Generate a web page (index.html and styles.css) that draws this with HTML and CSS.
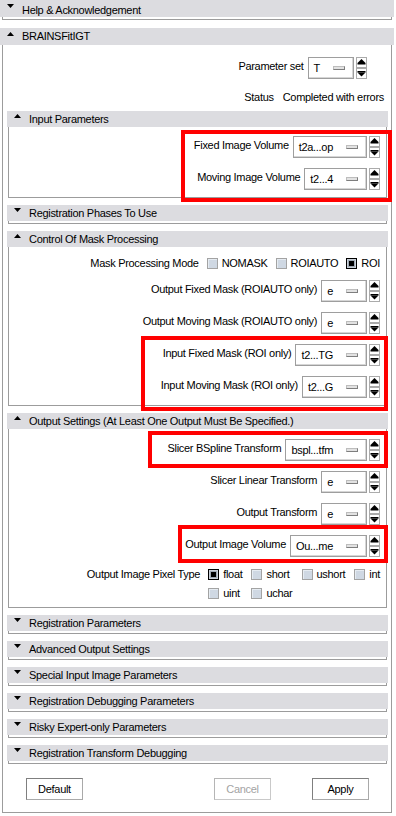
FILE: index.html
```html
<!DOCTYPE html>
<html lang="en">
<head>
<meta charset="utf-8">
<title>BRAINSFitIGT</title>
<link rel="stylesheet" href="styles.css">
</head>
<body>
<div class="app">

  <section class="fold fold-top fold-closed">
    <div class="hdr hdr-help">
      <svg class="tri" viewBox="0 0 7 4"><path d="M0 0H7L3.5 4z"/></svg>
      <span class="hdr-label">Help &amp; Acknowledgement</span>
    </div>
    <div class="fold-body"></div>
  </section>

  <section class="fold fold-top">
    <div class="hdr">
      <svg class="tri" viewBox="0 0 7 4"><path d="M3.5 0L7 4H0z"/></svg>
      <span class="hdr-label">BRAINSFitIGT</span>
    </div>
    <div class="fold-body main-body">

      <div class="row row-param">
        <span class="lbl">Parameter set</span>
        <div class="mb"><span class="mb-text">T</span><span class="mb-ind"></span></div>
        <div class="spin">
          <span class="spin-btn"><svg viewBox="0 0 9 9" width="9" height="9"><path d="M4.5 1L8.5 5H0.5z"/><rect x="0.5" y="5" width="8" height="1.5"/></svg></span>
          <span class="spin-btn"><svg viewBox="0 0 9 9" width="9" height="9"><rect x="0.5" y="2" width="8" height="1.5"/><path d="M0.5 3.5H8.5L4.5 7.5z"/></svg></span>
        </div>
      </div>

      <div class="row-status"><span>Status</span><span>Completed with errors</span></div>

      <section class="fold sub">
        <div class="hdr">
          <svg class="tri" viewBox="0 0 7 4"><path d="M3.5 0L7 4H0z"/></svg>
          <span class="hdr-label">Input Parameters</span>
        </div>
        <div class="fold-body sub-body body-input">
          <div class="row">
            <span class="lbl">Fixed Image Volume</span>
            <div class="mb"><span class="mb-text">t2a...op</span><span class="mb-ind"></span></div>
            <div class="spin">
              <span class="spin-btn"><svg viewBox="0 0 9 9" width="9" height="9"><path d="M4.5 1L8.5 5H0.5z"/><rect x="0.5" y="5" width="8" height="1.5"/></svg></span>
              <span class="spin-btn"><svg viewBox="0 0 9 9" width="9" height="9"><rect x="0.5" y="2" width="8" height="1.5"/><path d="M0.5 3.5H8.5L4.5 7.5z"/></svg></span>
            </div>
          </div>
          <div class="row">
            <span class="lbl">Moving Image Volume</span>
            <div class="mb"><span class="mb-text">t2...4</span><span class="mb-ind"></span></div>
            <div class="spin">
              <span class="spin-btn"><svg viewBox="0 0 9 9" width="9" height="9"><path d="M4.5 1L8.5 5H0.5z"/><rect x="0.5" y="5" width="8" height="1.5"/></svg></span>
              <span class="spin-btn"><svg viewBox="0 0 9 9" width="9" height="9"><rect x="0.5" y="2" width="8" height="1.5"/><path d="M0.5 3.5H8.5L4.5 7.5z"/></svg></span>
            </div>
          </div>
        </div>
      </section>

      <section class="fold sub fold-closed">
        <div class="hdr">
          <svg class="tri" viewBox="0 0 7 4"><path d="M0 0H7L3.5 4z"/></svg>
          <span class="hdr-label">Registration Phases To Use</span>
        </div>
        <div class="fold-body"></div>
      </section>

      <section class="fold sub">
        <div class="hdr">
          <svg class="tri" viewBox="0 0 7 4"><path d="M3.5 0L7 4H0z"/></svg>
          <span class="hdr-label">Control Of Mask Processing</span>
        </div>
        <div class="fold-body sub-body body-mask">
          <div class="row row-check">
            <span class="lbl lbl-check">Mask Processing Mode</span>
            <div class="opts">
              <span class="opt"><span class="cb"></span>NOMASK</span>
              <span class="opt"><span class="cb"></span>ROIAUTO</span>
              <span class="opt"><span class="cb cb-on"></span>ROI</span>
            </div>
          </div>
          <div class="row">
            <span class="lbl">Output Fixed Mask (ROIAUTO only)</span>
            <div class="mb"><span class="mb-text">e</span><span class="mb-ind"></span></div>
            <div class="spin">
              <span class="spin-btn"><svg viewBox="0 0 9 9" width="9" height="9"><path d="M4.5 1L8.5 5H0.5z"/><rect x="0.5" y="5" width="8" height="1.5"/></svg></span>
              <span class="spin-btn"><svg viewBox="0 0 9 9" width="9" height="9"><rect x="0.5" y="2" width="8" height="1.5"/><path d="M0.5 3.5H8.5L4.5 7.5z"/></svg></span>
            </div>
          </div>
          <div class="row">
            <span class="lbl">Output Moving Mask (ROIAUTO only)</span>
            <div class="mb"><span class="mb-text">e</span><span class="mb-ind"></span></div>
            <div class="spin">
              <span class="spin-btn"><svg viewBox="0 0 9 9" width="9" height="9"><path d="M4.5 1L8.5 5H0.5z"/><rect x="0.5" y="5" width="8" height="1.5"/></svg></span>
              <span class="spin-btn"><svg viewBox="0 0 9 9" width="9" height="9"><rect x="0.5" y="2" width="8" height="1.5"/><path d="M0.5 3.5H8.5L4.5 7.5z"/></svg></span>
            </div>
          </div>
          <div class="row">
            <span class="lbl">Input Fixed Mask (ROI only)</span>
            <div class="mb"><span class="mb-text">t2...TG</span><span class="mb-ind"></span></div>
            <div class="spin">
              <span class="spin-btn"><svg viewBox="0 0 9 9" width="9" height="9"><path d="M4.5 1L8.5 5H0.5z"/><rect x="0.5" y="5" width="8" height="1.5"/></svg></span>
              <span class="spin-btn"><svg viewBox="0 0 9 9" width="9" height="9"><rect x="0.5" y="2" width="8" height="1.5"/><path d="M0.5 3.5H8.5L4.5 7.5z"/></svg></span>
            </div>
          </div>
          <div class="row">
            <span class="lbl">Input Moving Mask (ROI only)</span>
            <div class="mb"><span class="mb-text">t2...G</span><span class="mb-ind"></span></div>
            <div class="spin">
              <span class="spin-btn"><svg viewBox="0 0 9 9" width="9" height="9"><path d="M4.5 1L8.5 5H0.5z"/><rect x="0.5" y="5" width="8" height="1.5"/></svg></span>
              <span class="spin-btn"><svg viewBox="0 0 9 9" width="9" height="9"><rect x="0.5" y="2" width="8" height="1.5"/><path d="M0.5 3.5H8.5L4.5 7.5z"/></svg></span>
            </div>
          </div>
        </div>
      </section>

      <section class="fold sub">
        <div class="hdr">
          <svg class="tri" viewBox="0 0 7 4"><path d="M3.5 0L7 4H0z"/></svg>
          <span class="hdr-label">Output Settings (At Least One Output Must Be Specified.)</span>
        </div>
        <div class="fold-body sub-body body-output">
          <div class="row">
            <span class="lbl">Slicer BSpline Transform</span>
            <div class="mb"><span class="mb-text">bspl...tfm</span><span class="mb-ind"></span></div>
            <div class="spin">
              <span class="spin-btn"><svg viewBox="0 0 9 9" width="9" height="9"><path d="M4.5 1L8.5 5H0.5z"/><rect x="0.5" y="5" width="8" height="1.5"/></svg></span>
              <span class="spin-btn"><svg viewBox="0 0 9 9" width="9" height="9"><rect x="0.5" y="2" width="8" height="1.5"/><path d="M0.5 3.5H8.5L4.5 7.5z"/></svg></span>
            </div>
          </div>
          <div class="row">
            <span class="lbl">Slicer Linear Transform</span>
            <div class="mb"><span class="mb-text">e</span><span class="mb-ind"></span></div>
            <div class="spin">
              <span class="spin-btn"><svg viewBox="0 0 9 9" width="9" height="9"><path d="M4.5 1L8.5 5H0.5z"/><rect x="0.5" y="5" width="8" height="1.5"/></svg></span>
              <span class="spin-btn"><svg viewBox="0 0 9 9" width="9" height="9"><rect x="0.5" y="2" width="8" height="1.5"/><path d="M0.5 3.5H8.5L4.5 7.5z"/></svg></span>
            </div>
          </div>
          <div class="row">
            <span class="lbl">Output Transform</span>
            <div class="mb"><span class="mb-text">e</span><span class="mb-ind"></span></div>
            <div class="spin">
              <span class="spin-btn"><svg viewBox="0 0 9 9" width="9" height="9"><path d="M4.5 1L8.5 5H0.5z"/><rect x="0.5" y="5" width="8" height="1.5"/></svg></span>
              <span class="spin-btn"><svg viewBox="0 0 9 9" width="9" height="9"><rect x="0.5" y="2" width="8" height="1.5"/><path d="M0.5 3.5H8.5L4.5 7.5z"/></svg></span>
            </div>
          </div>
          <div class="row">
            <span class="lbl">Output Image Volume</span>
            <div class="mb"><span class="mb-text">Ou...me</span><span class="mb-ind"></span></div>
            <div class="spin">
              <span class="spin-btn"><svg viewBox="0 0 9 9" width="9" height="9"><path d="M4.5 1L8.5 5H0.5z"/><rect x="0.5" y="5" width="8" height="1.5"/></svg></span>
              <span class="spin-btn"><svg viewBox="0 0 9 9" width="9" height="9"><rect x="0.5" y="2" width="8" height="1.5"/><path d="M0.5 3.5H8.5L4.5 7.5z"/></svg></span>
            </div>
          </div>
          <div class="row row-pixel">
            <span class="lbl lbl-check">Output Image Pixel Type</span>
            <div class="pixel-grid">
              <span class="opt"><span class="cb cb-on"></span>float</span>
              <span class="opt"><span class="cb"></span>short</span>
              <span class="opt"><span class="cb"></span>ushort</span>
              <span class="opt"><span class="cb"></span>int</span>
              <span class="opt"><span class="cb"></span>uint</span>
              <span class="opt"><span class="cb"></span>uchar</span>
            </div>
          </div>
        </div>
      </section>

      <section class="fold sub fold-closed">
        <div class="hdr">
          <svg class="tri" viewBox="0 0 7 4"><path d="M0 0H7L3.5 4z"/></svg>
          <span class="hdr-label">Registration Parameters</span>
        </div>
        <div class="fold-body"></div>
      </section>
      <section class="fold sub fold-closed">
        <div class="hdr">
          <svg class="tri" viewBox="0 0 7 4"><path d="M0 0H7L3.5 4z"/></svg>
          <span class="hdr-label">Advanced Output Settings</span>
        </div>
        <div class="fold-body"></div>
      </section>
      <section class="fold sub fold-closed">
        <div class="hdr">
          <svg class="tri" viewBox="0 0 7 4"><path d="M0 0H7L3.5 4z"/></svg>
          <span class="hdr-label">Special Input Image Parameters</span>
        </div>
        <div class="fold-body"></div>
      </section>
      <section class="fold sub fold-closed">
        <div class="hdr">
          <svg class="tri" viewBox="0 0 7 4"><path d="M0 0H7L3.5 4z"/></svg>
          <span class="hdr-label">Registration Debugging Parameters</span>
        </div>
        <div class="fold-body"></div>
      </section>
      <section class="fold sub fold-closed">
        <div class="hdr">
          <svg class="tri" viewBox="0 0 7 4"><path d="M0 0H7L3.5 4z"/></svg>
          <span class="hdr-label">Risky Expert-only Parameters</span>
        </div>
        <div class="fold-body"></div>
      </section>
      <section class="fold sub fold-closed">
        <div class="hdr">
          <svg class="tri" viewBox="0 0 7 4"><path d="M0 0H7L3.5 4z"/></svg>
          <span class="hdr-label">Registration Transform Debugging</span>
        </div>
        <div class="fold-body"></div>
      </section>

      <div class="actions">
        <button class="btn btn-default" type="button">Default</button>
        <button class="btn btn-cancel" type="button" disabled>Cancel</button>
        <button class="btn btn-apply" type="button">Apply</button>
      </div>
    </div>
  </section>

  <div class="mark mark-input"></div>
  <div class="mark mark-roi"></div>
  <div class="mark mark-bspline"></div>
  <div class="mark mark-outvol"></div>
</div>
</body>
</html>
```

FILE: styles.css
```css
* { box-sizing: border-box; }

html, body {
  margin: 0;
  padding: 0;
  background: #fff;
}

body {
  font-family: "Liberation Sans", Arial, Helvetica, sans-serif;
  font-size: 11px;
  letter-spacing: -0.3px;
  color: #000;
}

.app {
  position: relative;
  width: 396px;
  height: 816px;
  overflow: hidden;
}

/* ---------- collapsible frames ---------- */
.fold-top { width: 394px; }
.fold-top + .fold-top { margin-top: 8px; }

.hdr {
  display: flex;
  align-items: flex-start;
  height: 17px;
  padding-left: 7px;
  background: #dcdce0;
}

.tri {
  flex: none;
  width: 7px;
  height: 4px;
  margin-top: 4px;
  margin-right: 8px;
  fill: #000;
}

.hdr-label {
  line-height: 17px;
  white-space: nowrap;
}

.hdr-help { padding-top: 4px; }
.hdr-help .tri { margin-top: 0; }
.hdr-help .hdr-label { line-height: 13px; }

.fold-body {
  margin: 0 2px;
  border: 1px solid #9c9c9c;
  border-top: none;
  background: #fff;
}

.fold-closed > .fold-body { height: 3px; }

.main-body {
  display: flex;
  flex-direction: column;
  padding: 12px 0 12px;
}

/* sub sections */
.sub { margin: 0 3px 7px 4px; }
.sub > .hdr { height: 16px; }
.sub > .hdr .tri { margin-top: 3px; }
.sub .hdr-label { line-height: 16px; }
.sub > .fold-body { margin: 0 1px; }

.sub-body {
  display: flex;
  flex-direction: column;
  align-items: flex-end;
  padding: 9px 6px 7px 0;
}

.body-mask { padding-top: 5px; }
.body-output { padding-top: 10px; padding-bottom: 5px; }

/* ---------- rows ---------- */
.row {
  display: flex;
  align-items: flex-start;
  height: 22px;
}
.row + .row { margin-top: 10px; }

.row-param {
  justify-content: flex-end;
  padding-right: 24px;
}

.row-status {
  display: flex;
  justify-content: flex-end;
  gap: 9px;
  height: 18px;
  line-height: 18px;
  margin-top: 9px;
  padding-right: 7px;
  white-space: nowrap;
}

.row-status + .sub { margin-top: 5px; }

.lbl {
  line-height: 18px;
  margin-right: 4px;
  white-space: nowrap;
}

/* menubutton */
.mb {
  display: flex;
  align-items: center;
  height: 22px;
  padding: 0 8px 0 5px;
  border: 1px solid #9e9e9e;
  box-shadow: inset -1px -1px 0 #d6d6d6;
  background: #fff;
  white-space: nowrap;
}
.mb-text { margin-right: 13px; }
.mb-ind {
  width: 12px;
  height: 4px;
  border: 1px solid;
  border-color: #bdbdbd #7e7e7e #7e7e7e #bdbdbd;
  background: #e2e2e2;
}

/* spinner arrows */
.spin {
  display: flex;
  flex-direction: column;
  margin-left: 2px;
}
.spin-btn {
  display: flex;
  width: 11px;
  height: 11px;
  border: 1px solid #ababab;
  background: #fff;
}
.spin-btn svg { display: block; fill: #000; }

/* check rows */
.row-check { align-items: center; }
.row-check + .row { margin-top: 6px; }
.lbl-check { margin-right: 8px; }

.opts {
  display: flex;
  gap: 8px;
}

.opt {
  display: flex;
  align-items: center;
  gap: 4px;
  white-space: nowrap;
}

.cb {
  flex: none;
  display: flex;
  align-items: center;
  justify-content: center;
  width: 11px;
  height: 11px;
  border: 1px solid #a3a3a3;
  background: #cfd8e3;
  box-shadow: inset 1px 1px 0 #e6ecf2;
}
.cb-on {
  border-color: #000;
  background: #9ea8b3;
  box-shadow: inset 0 0 0 1px #c9d0d8;
}
.cb-on::after {
  content: "";
  width: 5px;
  height: 5px;
  background: #000;
}

.row + .row-pixel {
  height: auto;
  margin-top: 8px;
}

.pixel-grid {
  display: grid;
  grid-template-columns: repeat(4, auto);
  grid-auto-rows: 18px;
  row-gap: 1px;
  column-gap: 9px;
}

/* ---------- buttons ---------- */
.actions {
  display: flex;
  margin-top: 7px;
}

.btn {
  width: 57px;
  height: 22px;
  padding: 0;
  font: inherit;
  letter-spacing: inherit;
  color: #000;
  background: #fff;
  border: 1px solid;
  border-color: #7f7f7f #a9a9a9 #a9a9a9 #7f7f7f;
  border-radius: 0;
}
.btn-default { margin-left: 23px; }
.btn-cancel {
  margin-left: 131px;
  color: #a3a3a3;
  border-color: #b5b5b5 #c9c9c9 #c9c9c9 #b5b5b5;
}
.btn-apply { margin-left: 41px; }

/* ---------- red annotation boxes (overlay) ---------- */
.mark {
  position: absolute;
  border: 4px solid #f00;
  pointer-events: none;
}
.mark-input { left: 181px; top: 130px; width: 211px; height: 72px; }
.mark-roi { left: 141px; top: 336px; width: 247px; height: 75px; }
.mark-bspline { left: 148px; top: 431px; width: 240px; height: 37px; }
.mark-outvol { left: 178px; top: 525px; width: 210px; height: 38px; }
```
